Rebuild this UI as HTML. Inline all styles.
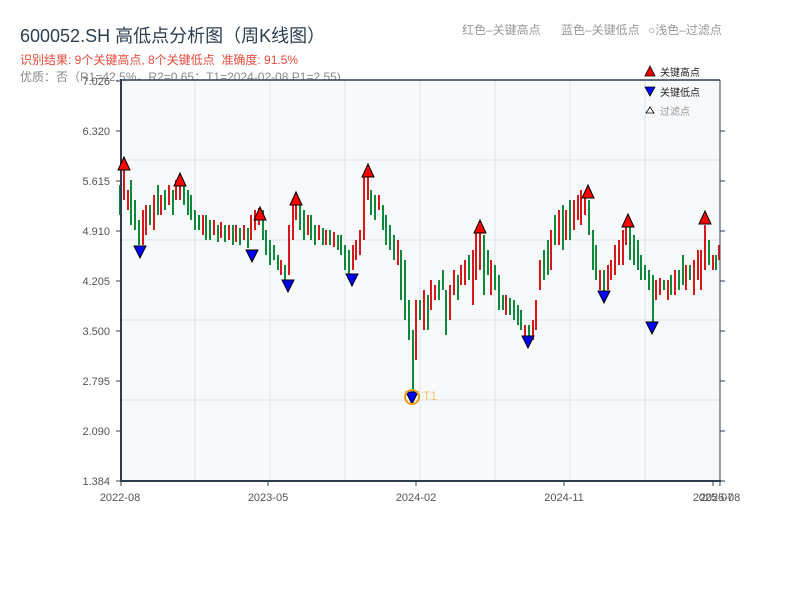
<!DOCTYPE html>
<html><head><meta charset="utf-8"><style>
html,body{margin:0;padding:0;background:#fff;width:800px;height:600px;overflow:hidden}
body{font-family:"Liberation Sans","Noto Sans CJK SC",sans-serif;position:relative}
.t{position:absolute;white-space:nowrap}
</style></head><body>
<div class="t" style="left:20px;top:22px;font-size:18px;color:#2c3e50">600052.SH 高低点分析图（周K线图）</div>
<div class="t" style="left:20px;top:51px;font-size:12px;color:#e74c3c">识别结果: 9个关键高点, 8个关键低点&nbsp;&nbsp;准确度: 91.5%</div>
<div class="t" style="left:20px;top:68px;font-size:12px;color:#888">优质：否（R1=42.5%，R2=0.65；T1=2024-02-08 P1=2.55)</div>
<div class="t" style="left:462px;top:21px;font-size:12px;color:#999">红色–关键高点</div>
<div class="t" style="left:561px;top:21px;font-size:12px;color:#999">蓝色–关键低点</div>
<div class="t" style="left:648px;top:21px;font-size:12px;color:#999">○浅色–过滤点</div>
<svg width="800" height="600" style="position:absolute;left:0;top:0" xmlns="http://www.w3.org/2000/svg" font-family="Liberation Sans, Noto Sans CJK SC, sans-serif">
<rect x="121" y="80" width="599" height="401" fill="#f7f9fb"/>
<g stroke="#e1e5ea" stroke-width="1">
<line x1="195" y1="80" x2="195" y2="481"/><line x1="270" y1="80" x2="270" y2="481"/><line x1="345" y1="80" x2="345" y2="481"/><line x1="420" y1="80" x2="420" y2="481"/><line x1="495" y1="80" x2="495" y2="481"/><line x1="570" y1="80" x2="570" y2="481"/><line x1="645" y1="80" x2="645" y2="481"/>
<line x1="121" y1="160" x2="720" y2="160"/><line x1="121" y1="240" x2="720" y2="240"/><line x1="121" y1="320" x2="720" y2="320"/><line x1="121" y1="400" x2="720" y2="400"/>
</g>
<path stroke="#d7191c" stroke-width="2" fill="none" d="M124 165V200M128 190V210M143 210V245M146 205V235M154 195V230M161 195V215M169 185V205M176 180V200M180 175V200M203 215V235M214 220V235M221 222V238M229 225V240M236 225V242M244 225V240M251 215V240M255 210V230M259 208V225M281 260V275M289 225V275M293 205V240M296 200V220M308 215V235M319 225V240M326 230V245M334 232V247M353 245V270M356 240V260M360 230V255M364 175V240M368 170V200M379 195V210M398 240V265M416 300V360M424 290V330M431 280V310M435 285V300M450 285V320M454 270V295M461 265V285M465 260V285M473 250V305M476 230V280M480 228V270M491 260V295M506 295V315M525 325V340M533 320V340M536 300V330M540 260V290M551 230V270M559 210V245M566 210V240M574 200V230M578 195V220M581 190V225M585 195V215M600 270V290M608 265V290M611 260V280M615 245V275M619 240V265M623 230V265M626 225V245M656 280V300M660 278V295M668 280V300M675 270V295M686 265V290M694 260V295M698 250V280M701 250V290M705 225V270M713 255V270M719 245V260"/>
<path stroke="#0b8a3c" stroke-width="2" fill="none" d="M120 185V215M131 180V225M135 200V230M139 220V245M150 205V225M158 185V215M165 190V210M173 190V215M184 185V205M188 190V215M191 195V220M195 210V230M199 215V230M206 215V240M210 220V240M218 225V242M225 225V242M233 225V245M240 228V245M248 228V248M263 210V240M266 230V255M270 240V265M274 245V260M278 255V270M285 265V280M300 205V230M304 210V240M311 215V240M315 225V245M323 228V245M330 230V245M338 235V250M341 235V255M345 245V270M349 250V275M371 190V215M375 195V220M383 205V230M386 215V245M390 225V250M394 235V260M401 250V300M405 260V320M409 300V340M413 330V395M420 300V320M428 295V330M439 280V300M443 270V290M446 290V335M458 275V300M469 255V280M484 235V295M488 250V275M495 265V290M499 275V310M503 295V310M510 298V315M514 300V320M518 305V325M521 310V330M529 325V340M544 250V280M548 240V275M555 215V245M563 205V250M570 200V240M589 200V235M593 230V270M596 245V280M604 270V300M630 225V260M634 235V265M638 240V270M641 255V280M645 265V280M649 270V290M653 275V325M664 280V290M671 275V295M679 270V290M683 255V285M690 265V280M709 240V265M716 255V270"/>
<g stroke="#2c3e50" fill="none">
<line x1="121" y1="80" x2="720" y2="80" stroke-width="1.5"/>
<line x1="121" y1="79" x2="121" y2="482" stroke-width="2"/>
<line x1="120" y1="481" x2="721" y2="481" stroke-width="2"/>
<line x1="720" y1="80" x2="720" y2="482" stroke-width="1"/>
<g stroke-width="1">
<line x1="116" y1="81" x2="121" y2="81"/><line x1="116" y1="131" x2="121" y2="131"/><line x1="116" y1="181" x2="121" y2="181"/><line x1="116" y1="231" x2="121" y2="231"/><line x1="116" y1="281" x2="121" y2="281"/><line x1="116" y1="331" x2="121" y2="331"/><line x1="116" y1="381" x2="121" y2="381"/><line x1="116" y1="431" x2="121" y2="431"/><line x1="116" y1="481" x2="121" y2="481"/>
<line x1="720" y1="131" x2="725" y2="131"/><line x1="720" y1="181" x2="725" y2="181"/><line x1="720" y1="231" x2="725" y2="231"/><line x1="720" y1="281" x2="725" y2="281"/><line x1="720" y1="331" x2="725" y2="331"/><line x1="720" y1="381" x2="725" y2="381"/><line x1="720" y1="431" x2="725" y2="431"/><line x1="720" y1="481" x2="725" y2="481"/>
<line x1="121" y1="481" x2="121" y2="486"/><line x1="268" y1="481" x2="268" y2="486"/><line x1="416" y1="481" x2="416" y2="486"/><line x1="564" y1="481" x2="564" y2="486"/><line x1="713" y1="481" x2="713" y2="486"/><line x1="720" y1="481" x2="720" y2="486"/>
</g></g>
<g font-size="11" fill="#555" text-anchor="end">
<text x="110" y="85">7.026</text><text x="110" y="135">6.320</text><text x="110" y="185">5.615</text><text x="110" y="235">4.910</text><text x="110" y="285">4.205</text><text x="110" y="335">3.500</text><text x="110" y="385">2.795</text><text x="110" y="435">2.090</text><text x="110" y="485">1.384</text>
</g>
<g font-size="11" fill="#555" text-anchor="middle">
<text x="120" y="501">2022-08</text><text x="268" y="501">2023-05</text><text x="416" y="501">2024-02</text><text x="564" y="501">2024-11</text><text x="713" y="501">2025-07</text><text x="720" y="501">2025-08</text>
</g>
<g fill="#f00" stroke="#000" stroke-width="1">
<polygon points="124,157 118,170 130,170"/><polygon points="180,173 174,186 186,186"/><polygon points="260,207 254,220 266,220"/><polygon points="296,192 290,205 302,205"/><polygon points="368,164 362,177 374,177"/><polygon points="480,220 474,233 486,233"/><polygon points="588,185 582,198 594,198"/><polygon points="628,214 622,227 634,227"/><polygon points="705,211 699,224 711,224"/>
</g>
<g fill="#00f" stroke="#000" stroke-width="1">
<polygon points="134,246 146,246 140,258"/><polygon points="246,250 258,250 252,262"/><polygon points="282,280 294,280 288,292"/><polygon points="346,274 358,274 352,286"/><polygon points="406,392 418,392 412,404"/><polygon points="522,336 534,336 528,348"/><polygon points="598,291 610,291 604,303"/><polygon points="646,322 658,322 652,334"/>
</g>
<circle cx="412" cy="397" r="7" fill="none" stroke="#f39c12" stroke-width="2"/>
<text x="423" y="400" font-size="12" fill="#f5c26b">T1</text>
<polygon points="650,66 645,76 655,76" fill="#e00" stroke="#000" stroke-width="0.8"/>
<text x="660" y="76" font-size="10" fill="#222">关键高点</text>
<polygon points="645,87 655,87 650,96" fill="#00f" stroke="#000" stroke-width="0.8"/>
<text x="660" y="96" font-size="10" fill="#222">关键低点</text>
<polygon points="650,107 646,113 654,113" fill="#fff" stroke="#000" stroke-width="0.8"/>
<text x="660" y="115" font-size="10" fill="#999">过滤点</text>
</svg>
</body></html>
